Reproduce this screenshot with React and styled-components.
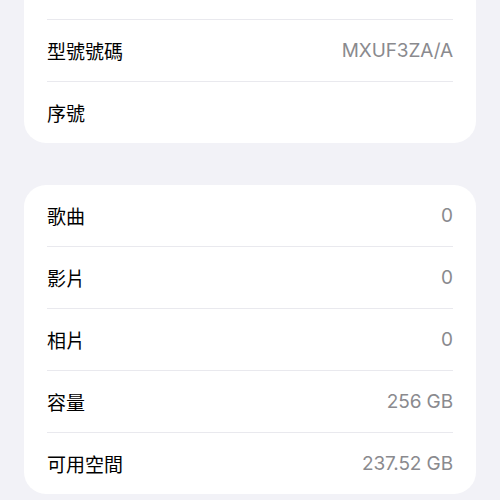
import React from "react";
import styled, { createGlobalStyle } from "styled-components";

const Global = createGlobalStyle`
  html, body {
    margin: 0;
    padding: 0;
    background: #f2f2f7;
  }
  body {
    font-family: Inter, "Noto Sans CJK TC", sans-serif;
    -webkit-font-smoothing: antialiased;
  }
`;

const Page = styled.div`
  display: flex;
  flex-direction: column;
  gap: 42px;
  padding: 0 24px;
  margin-top: -42px;
  height: 542px;
  overflow: hidden;
`;

const Card = styled.div`
  background: #ffffff;
  border-radius: 22px;
  padding: 0 23px;
`;

const Row = styled.div`
  display: flex;
  align-items: center;
  justify-content: space-between;
  height: 61px;
  & + & {
    border-top: 1px solid #e9e9ee;
  }
`;

const Label = styled.span`
  font-size: 19px;
  color: #000000;
`;

const Value = styled.span`
  font-size: 19px;
  color: #8a8a8e;
  letter-spacing: -0.1px;
`;

// first row of the device list is scrolled above the top edge
const device = [
  { id: "top", label: "", value: "" },
  { id: "model", label: "型號號碼", value: "MXUF3ZA/A" },
  { id: "serial", label: "序號", value: "" },
];

const media = [
  { id: "songs", label: "歌曲", value: "0" },
  { id: "videos", label: "影片", value: "0" },
  { id: "photos", label: "相片", value: "0" },
  { id: "capacity", label: "容量", value: "256 GB" },
  { id: "available", label: "可用空間", value: "237.52 GB" },
];

const Section = ({ rows }) => (
  <Card>
    {rows.map((r) => (
      <Row key={r.id}>
        <Label>{r.label}</Label>
        <Value>{r.value}</Value>
      </Row>
    ))}
  </Card>
);

export default function App() {
  return (
    <>
      <Global />
      <Page>
        <Section rows={device} />
        <Section rows={media} />
      </Page>
    </>
  );
}
